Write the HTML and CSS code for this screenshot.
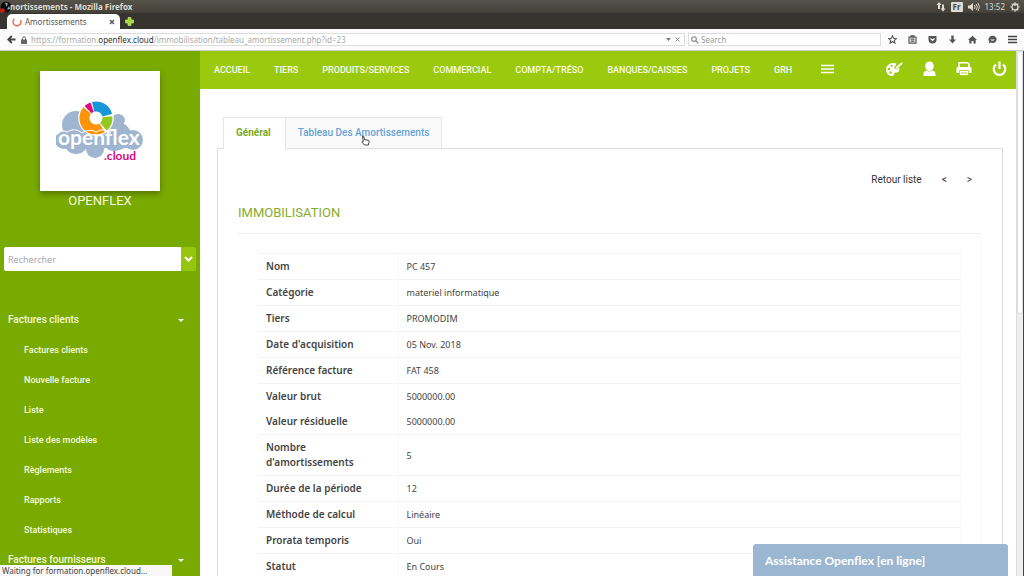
FILE: index.html
```html
<!DOCTYPE html>
<html lang="fr">
<head>
<meta charset="utf-8">
<title>Amortissements</title>
<link rel="stylesheet" href="styles.css">
</head>
<body>
<header class="browser">
  <div class="titlebar">
    <svg class="app-mark" width="12" height="12" viewBox="0 0 12 12"><circle cx="6" cy="6" r="5.5" fill="#0c0c0c"/><path d="M5 1.5l3 1-1.5 3zM9 5l1 3-3 .5z" fill="#aaa"/><circle cx="2.5" cy="9.5" r="2.3" fill="#e3130c"/></svg>
    <span class="window-title">nortissements - Mozilla Firefox</span>
    <div class="indicators">
      <svg width="10" height="10" viewBox="0 0 10 10" fill="#dfdbd2"><path d="M3 0L0.5 3H2v4h2V3h1.500zM7 9.500L4.500 6.500H6V2.500h2v4h1.500z"/></svg>
      <span class="lang">Fr</span>
      <svg width="12" height="10" viewBox="0 0 12 10" fill="#dfdbd2"><path d="M0 3.500h2L5 1v8L2 6.500H0z"/><path d="M6.500 3q1.300 2 0 4M8.300 2q2 3 0 6M10 1q2.800 4 0 8" fill="none" stroke="#dfdbd2" stroke-width=".9"/></svg>
      <span class="clock">13:52</span>
      <svg width="10" height="10" viewBox="0 0 10 10" fill="none" stroke="#dfdbd2"><circle cx="5" cy="5" r="3" stroke-width="1.300"/><path d="M5 .2v3.800M.3 5h1.500M8.200 5h1.500M1.700 1.700l1 1M8.300 1.700l-1 1M1.700 8.300l1-1M8.300 8.300l-1-1M5 8.200v1.500" stroke-width="1.200"/></svg>
    </div>
  </div>
  <div class="tabstrip">
    <div class="browser-tab">
      <svg width="10" height="10" viewBox="0 0 10 10" fill="none" stroke="#e8704a" stroke-width="1.400"><path d="M2.500 1.800A3.900 3.900 0 1 0 8.500 3"/></svg>
      <span class="tab-name">Amortissements</span>
      <button class="plain" aria-label="Fermer l'onglet"><svg width="6" height="6" viewBox="0 0 6 6" stroke="#555" stroke-width="1.400"><path d="M1 1l4 4M5 1L1 5"/></svg></button>
    </div>
    <button class="plain" aria-label="Nouvel onglet"><svg width="9" height="9" viewBox="0 0 9 9"><path d="M3 .5h3V3h2.500v3H6v2.500H3V6H.5V3H3z" fill="#a5d63a" stroke="#d5ee9a" stroke-width=".6"/></svg></button>
  </div>
  <div class="navbar">
    <button class="plain back" aria-label="Retour"><svg width="9" height="9" viewBox="0 0 9 9" fill="none" stroke="#444" stroke-width="1.800"><path d="M8.500 4.500H1.500M4.800 1L1.300 4.500 4.800 8"/></svg></button>
    <div class="urlbar">
      <svg width="6" height="8" viewBox="0 0 6 8"><path d="M1.500 4V2.300a1.500 1.500 0 0 1 3 0V4" fill="none" stroke="#666"/><path d="M0 3.500h6V8H0z" fill="#666"/></svg>
      <span class="url">https://formation.<b>openflex.cloud</b>/immobilisation/tableau_amortissement.php?id=23</span>
      <svg width="5" height="4" viewBox="0 0 5 4"><path d="M0 0h5L2.500 3z" fill="#777"/></svg>
      <svg width="5" height="5" viewBox="0 0 5 5" stroke="#888"><path d="M.5.5l4 4M4.500.5l-4 4"/></svg>
    </div>
    <div class="searchbar">
      <svg width="8" height="8" viewBox="0 0 8 8" fill="none" stroke="#888" stroke-width="1.100"><circle cx="3" cy="3" r="2.300"/><path d="M4.800 4.800L7.500 7.500"/></svg>
      <input type="text" placeholder="Search" aria-label="Search">
    </div>
    <div class="tools">
      <svg width="9" height="9" viewBox="0 0 9 9" fill="none" stroke="#555" stroke-width="1.100"><path d="M4.500.8l1.100 2.500 2.700.3-2 1.800.6 2.700-2.400-1.400-2.400 1.400.6-2.700-2-1.800 2.700-.3z"/></svg>
      <svg width="9" height="9" viewBox="0 0 9 9" fill="none" stroke="#555" stroke-width="1.200"><path d="M1 2.200h7v6H1zM3 2V.8h3V2M2.500 4.200h4M2.500 6.200h4"/></svg>
      <svg width="9" height="9" viewBox="0 0 9 9"><path d="M.5 1h8v3.500a4 4 0 0 1-8 0z" fill="#555"/><path d="M2.500 3.500l2 2 2-2" fill="none" stroke="#fff" stroke-width="1.200"/></svg>
      <svg width="9" height="9" viewBox="0 0 9 9" fill="#555"><path d="M3.300.5h2.400v4H8L4.500 8.500 1 4.500h2.300z"/></svg>
      <svg width="9" height="9" viewBox="0 0 9 9" fill="#555"><path d="M4.500.8L9 5H7.700v3.500H5.500V6h-2v2.500H1.300V5H0z"/></svg>
      <svg width="9" height="9" viewBox="0 0 9 9"><path d="M4.500.8a4.200 3.600 0 1 1-2 6.800L.5 8.500l.8-2A3.800 3.600 0 0 1 4.500.8z" fill="#555"/><path d="M2.200 4.500h4.600q-2.300 2.600-4.600 0z" fill="#fff"/></svg>
      <svg class="menu" width="9" height="9" viewBox="0 0 9 9" stroke="#444" stroke-width="1.500"><path d="M0 1.500h9M0 4.500h9M0 7.500h9"/></svg>
    </div>
  </div>
</header>

<div class="app">
  <aside class="sidebar">
    <div class="brand">
      <div class="logo-card">
        <svg width="88" height="62" viewBox="0 0 88 62" role="img" aria-label="openflex.cloud">
          <g fill="#9fb5d0"><circle cx="20" cy="25" r="14"/><ellipse cx="62" cy="20" rx="7" ry="6"/><circle cx="61" cy="36" r="14"/><circle cx="8" cy="40" r="9"/><circle cx="20" cy="42" r="12"/><circle cx="39" cy="41" r="12"/><circle cx="58" cy="40" r="11"/><circle cx="77" cy="40" r="10"/><path d="M8 34h66v14H8z"/><circle cx="39" cy="49" r="9"/></g>
          <circle cx="40" cy="18" r="17.800" fill="#fff"/>
          <g fill="none" stroke-width="10"><path d="M31.200 10.600A11.500 11.500 0 0 0 46.100 27.800" stroke="#ff9408"/><path d="M32 9.700A11.500 11.500 0 0 1 36.100 7.200" stroke="#e4057e"/><path d="M37.200 6.800A11.500 11.500 0 0 1 51.200 15.200" stroke="#1697d8"/><path d="M51.400 16.800A11.500 11.500 0 0 1 47.400 26.800" stroke="#94c720"/></g>
          <path d="M1 35q4-6 10-3 8-5 15 1 8-5 14-1 8-5 15 1" fill="none" stroke="#fff"/>
          <text class="logo-name" x="2" y="45" fill="#fff">openflex</text>
          <text class="logo-suffix" x="48" y="60" fill="#dc0a80">.cloud</text>
        </svg>
      </div>
      <span class="brand-name">OPENFLEX</span>
    </div>
    <form class="lookup">
      <input type="text" placeholder="Rechercher" aria-label="Rechercher">
      <button type="button" aria-label="Options de recherche"><svg width="9" height="6" viewBox="0 0 9 6" fill="none" stroke="#fff" stroke-width="2"><path d="M1 1l3.500 3.500L8 1"/></svg></button>
    </form>
    <nav class="side-menu">
      <a class="group" href="#">Factures clients<span class="caret"></span></a>
      <a class="item" href="#">Factures clients</a>
      <a class="item" href="#">Nouvelle facture</a>
      <a class="item" href="#">Liste</a>
      <a class="item" href="#">Liste des modèles</a>
      <a class="item" href="#">Règlements</a>
      <a class="item" href="#">Rapports</a>
      <a class="item" href="#">Statistiques</a>
      <a class="group" href="#">Factures fournisseurs<span class="caret"></span></a>
    </nav>
  </aside>

  <div class="page">
    <div class="topbar">
      <nav class="top-menu">
        <a href="#">ACCUEIL</a><a href="#">TIERS</a><a href="#">PRODUITS/SERVICES</a><a href="#">COMMERCIAL</a><a href="#">COMPTA/TRÉSO</a><a href="#">BANQUES/CAISSES</a><a href="#">PROJETS</a><a href="#">GRH</a>
        <a class="more" href="#" aria-label="Plus"><svg width="13" height="10" viewBox="0 0 13 10" stroke="#fff" stroke-width="1.500"><path d="M0 1.500h13M0 5h13M0 8.500h13"/></svg></a>
      </nav>
      <div class="top-tools">
        <button class="plain" aria-label="Thème"><svg width="17" height="16" viewBox="0 0 17 16"><path d="M7 2C3 2 0 5 0 8.500 0 12.500 3 15 6 15c2.500 0 1.500-2 2.500-3s3.500 0 4.500-2c.6-1.200.5-2.500 0-3.500L10 8.500 8 7l2.500-4.500Q9 2 7 2z" fill="#fff"/><path d="M9 8.500l1-2.500 4.500-4 2.300-.7L16 3.500 11.500 7z" fill="#fff"/><g fill="#9bc90e"><circle cx="3" cy="8" r="1.200"/><circle cx="5.500" cy="4.800" r="1.100"/><circle cx="4.500" cy="11.500" r="1.200"/></g></svg></button>
        <button class="plain" aria-label="Utilisateur"><svg width="13" height="16" viewBox="0 0 13 16" fill="#fff"><path d="M6.500 .5C9.200.5 10.800 2.500 10.800 5S9 10 6.500 10 2.200 7.500 2.200 5 3.800.5 6.500.5zM.5 15q-.5-4.800 3-5.500 3 1.800 6 0 3.500.7 3 5.500z"/></svg></button>
        <button class="plain" aria-label="Imprimer"><svg width="16" height="16" viewBox="0 0 16 16"><path d="M3 6V1.800h8.500L13 3.300V6" fill="none" stroke="#fff" stroke-width="1.600"/><path d="M2 6h12q1.500 0 1.500 1.500V12H.5V7.500Q.5 6 2 6z" fill="#fff"/><path d="M3.500 9.500h9v5h-9z" fill="#fff" stroke="#9bc90e" stroke-width=".8"/><path d="M5 12h6" stroke="#9bc90e" stroke-width=".8"/></svg></button>
        <button class="plain" aria-label="Déconnexion"><svg width="15" height="16" viewBox="0 0 15 16" fill="none" stroke="#fff" stroke-width="2.200"><path d="M4.200 3.300a5.800 5.800 0 1 0 6.600 0M7.500 .5v7.500"/></svg></button>
      </div>
    </div>
    <main class="content">
      <div class="tabs">
        <a class="tab active" href="#">Général</a>
        <a class="tab" href="#">Tableau Des Amortissements<svg class="pointer" width="9" height="11" viewBox="0 0 9 11"><path d="M1.500 1q1.200-.6 1.500 1l.4 2.500 4 .8q1 .4.7 1.700L7.300 10H3.500L.8 7Q1 6 2.300 6.500z" fill="#fff" stroke="#444"/></svg></a>
      </div>
      <section class="panel">
        <div class="record-nav"><a href="#">Retour liste</a><a href="#" aria-label="Précédent">&lt;</a><a href="#" aria-label="Suivant">&gt;</a></div>
        <h1>IMMOBILISATION</h1>
        <div class="sheet">
          <table>
            <tr><th scope="row">Nom</th><td>PC 457</td></tr>
            <tr><th scope="row">Catégorie</th><td>materiel informatique</td></tr>
            <tr><th scope="row">Tiers</th><td>PROMODIM</td></tr>
            <tr><th scope="row">Date d'acquisition</th><td>05 Nov. 2018</td></tr>
            <tr><th scope="row">Référence facture</th><td>FAT 458</td></tr>
            <tr class="joined"><th scope="row">Valeur brut</th><td>5000000.00</td></tr>
            <tr><th scope="row">Valeur résiduelle</th><td>5000000.00</td></tr>
            <tr><th scope="row">Nombre d'amortissements</th><td>5</td></tr>
            <tr><th scope="row">Durée de la période</th><td>12</td></tr>
            <tr><th scope="row">Méthode de calcul</th><td>Linéaire</td></tr>
            <tr><th scope="row">Prorata temporis</th><td>Oui</td></tr>
            <tr><th scope="row">Statut</th><td>En Cours</td></tr>
          </table>
        </div>
      </section>
    </main>
  </div>
  <div class="scrollbar"><div class="thumb"></div></div>
</div>
<div class="status">Waiting for formation.openflex.cloud...</div>
<button class="chat">Assistance Openflex [en ligne]</button>
</body>
</html>
```
FILE: styles.css
```css
* { box-sizing: border-box; }
body {
  margin: 0;
  height: 100vh;
  display: flex;
  flex-direction: column;
  overflow: hidden;
  background: #fff;
  font-family: Roboto, "Liberation Sans", sans-serif;
  font-size: 10px;
}
a { color: inherit; text-decoration: none; }
svg { display: block; flex: none; }
button, input { font: inherit; }
.plain { border: 0; padding: 0; background: none; }

.browser { flex: none; font-family: "Noto Sans", sans-serif; font-size: 8px; }
.titlebar {
  display: flex;
  align-items: center;
  height: 13px;
  padding-right: 4px;
  background: linear-gradient(#55534a, #434139);
  color: #dfdbd2;
}
.window-title { margin-left: -2px; font-weight: 700; font-size: 8px; }
.indicators { display: flex; align-items: center; gap: 5px; margin-left: auto; }
.lang { padding: 0 2px; border-radius: 1px; background: #dfdbd2; color: #444; font-weight: 700; line-height: 10px; }
.tabstrip { display: flex; align-items: center; gap: 5px; height: 16px; padding-left: 7px; background: #35342f; }
.browser-tab {
  display: flex;
  align-items: center;
  gap: 3px;
  width: 113px;
  height: 15px;
  margin-top: 1px;
  padding: 0 5px 0 5px;
  border-radius: 5px 5px 0 0;
  background: #fff;
  color: #555;
}
.tab-name { flex: 1; }
.navbar { display: flex; align-items: center; height: 22px; padding: 0 7px 0 3px; border-bottom: 1px solid #ccc; background: #fcfcfc; }
.back { display: grid; place-items: center; width: 16px; height: 16px; }
.urlbar, .searchbar { display: flex; align-items: center; height: 13px; border: 1px solid #ddd; background: #fff; }
.urlbar { flex: 1; gap: 4px; padding: 0 4px 0 2px; border-left: 0; }
.url { flex: 1; color: #aaa; white-space: nowrap; }
.url b { font-weight: 400; color: #333; }
.searchbar { width: 193px; gap: 2px; margin-left: 3px; padding-left: 2px; }
.searchbar input { flex: 1; min-width: 0; padding: 0; border: 0; background: none; line-height: 10px; }
.searchbar input::placeholder { color: #999; opacity: 1; }
.tools { display: flex; gap: 11px; margin-left: 7px; }

.app { flex: 1; min-height: 0; display: flex; }
.sidebar { flex: none; width: 200px; background: #79aa00; color: #f4fadf; overflow: hidden; }
.brand { display: flex; flex-direction: column; align-items: center; padding-top: 20px; }
.logo-card { display: grid; place-items: center; width: 120px; height: 120px; background: #fff; box-shadow: 0 3px 6px rgba(0, 0, 0, .3); }
.logo-name { font: 700 21px Lato, sans-serif; }
.logo-suffix { font: 700 12px Lato, sans-serif; }
.brand-name { margin-top: 2px; font-size: 13px; line-height: 16px; }
.lookup { display: flex; height: 24px; margin: 38px 4px 0; }
.lookup input { flex: 1; min-width: 0; padding: 0 4px; border: 0; border-radius: 2px 0 0 2px; background: #fff; font-family: "Noto Sans", sans-serif; font-size: 9px; }
.lookup input::placeholder { color: #aaa; opacity: 1; }
.lookup button { display: grid; place-items: center; width: 15px; padding: 0; border: 0; border-radius: 0 2px 2px 0; background: #95c60d; }
.side-menu { display: flex; flex-direction: column; padding-top: 34px; font-size: 9px; font-weight: 500; line-height: 30px; }
.group { display: flex; align-items: center; justify-content: space-between; padding: 0 16px 0 8px; font-size: 10px; }
.caret { border: 3px solid transparent; border-top-color: #fff; border-bottom: 0; }
.item { padding-left: 24px; }

.page { flex: 1; min-width: 0; }
.topbar { display: flex; align-items: center; justify-content: space-between; height: 38px; padding: 0 9px 0 14px; background: #9bc90e; color: #f8fce8; font-size: 9px; font-weight: 500; }
.top-menu { display: flex; align-items: center; gap: 24px; }
.top-tools { display: flex; align-items: center; gap: 20px; }
.top-tools, .more { padding-bottom: 3px; }
.more { padding-left: 5px; }
.content { padding: 28px 13px 0 17px; }
.tabs { display: flex; padding-left: 6px; }
.tab { position: relative; padding: 0 12px; border: 1px solid #e6e6e6; border-bottom: 0; background: #fafafa; color: #64a3d6; font-weight: 500; line-height: 30px; }
.tab + .tab { border-left: 0; }
.tab.active { z-index: 1; margin-bottom: -1px; padding-right: 14px; background: #fff; color: #7daa1c; font-weight: 700; }
.pointer { position: absolute; left: 75px; top: 17px; }
.panel { padding: 20px 21px 0 20px; border: 1px solid #ddd; border-bottom: 0; }
.record-nav { display: flex; justify-content: flex-end; gap: 20px; padding-right: 9px; color: #333; line-height: 22px; }
h1 { margin: 12px 0 0; padding-bottom: 10px; border-bottom: 1px solid #eee; color: #86ac2a; font-size: 13px; font-weight: 400; line-height: 20px; }
.sheet { padding: 19px 19px 0 20px; border-right: 1px solid #f8f8f8; }
table { width: 100%; border-collapse: collapse; border-top: 1px solid #f3f3f3; border-right: 1px solid #f8f8f8; font-family: "Noto Sans", sans-serif; font-size: 10px; line-height: 15px; color: #444; }
th, td { padding: 5px 8px; border-bottom: 1px solid #f3f3f3; text-align: left; vertical-align: middle; }
th { width: 140px; border-right: 1px solid #f8f8f8; font-weight: 600; }
td { font-size: 9px; }
.joined th, .joined td { border-bottom: 0; }
.scrollbar { flex: none; width: 8px; border-left: 1px solid #ddd; border-right: 1px solid #444; background: #eee; }
.thumb { height: 50%; border: 1px solid #ddd; border-radius: 3px; background: #fff; }

.status { position: absolute; left: 0; bottom: 0; width: 172px; height: 11px; padding-left: 2px; background: #f8f8f8; color: #444; font: 8px/11px "Noto Sans", sans-serif; white-space: nowrap; }
.chat { position: absolute; right: 16px; bottom: 0; width: 255px; height: 32px; padding: 0 12px; border: 0; border-radius: 3px 3px 0 0; background: #9bb6d0; color: #fff; font-family: Lato, sans-serif; font-size: 12px; font-weight: 700; text-align: left; }
```
